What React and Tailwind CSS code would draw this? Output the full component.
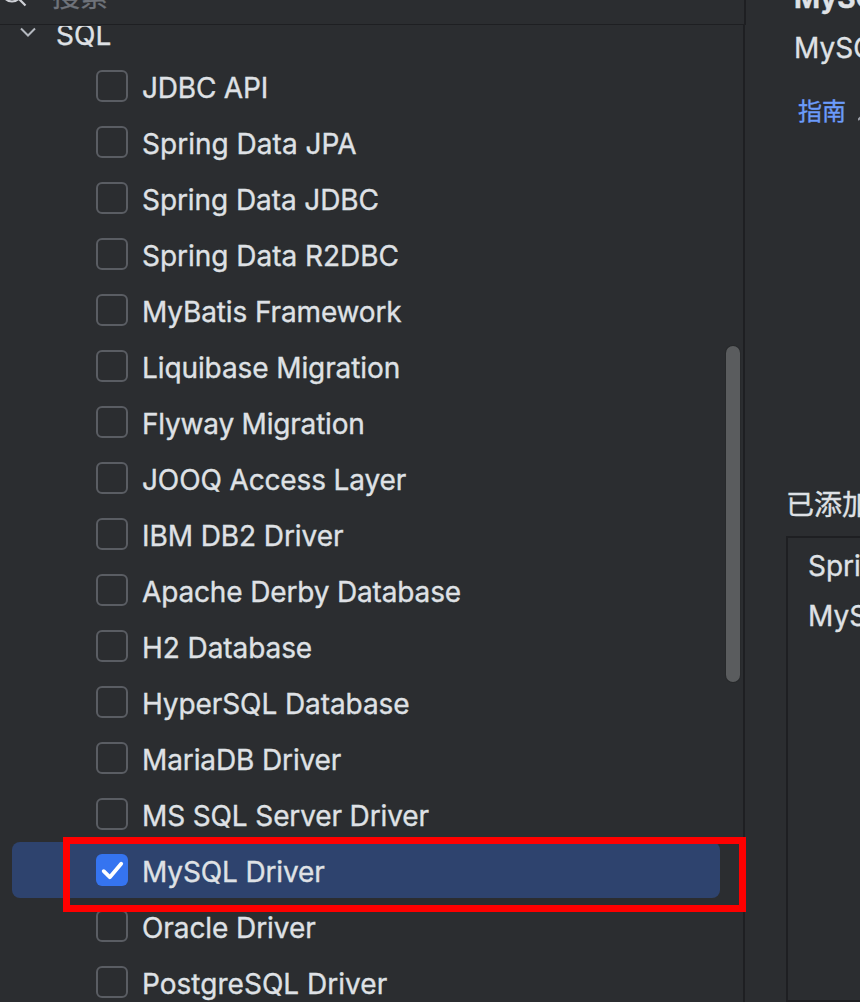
const rows = [
  ['JDBC API', 'tracking-[-0.2px]'],
  ['Spring Data JPA', 'tracking-[0.02px]'],
  ['Spring Data JDBC', 'tracking-[-0.08px]'],
  ['Spring Data R2DBC', 'tracking-[-0.02px]'],
  ['MyBatis Framework', 'tracking-[-0.13px]'],
  ['Liquibase Migration', 'tracking-[-0.1px]'],
  ['Flyway Migration', 'tracking-[-0.2px]'],
  ['JOOQ Access Layer', 'tracking-[-0.13px]'],
  ['IBM DB2 Driver', 'tracking-[-0.08px]'],
  ['Apache Derby Database', 'tracking-[-0.15px]'],
  ['H2 Database', 'tracking-[-0.08px]'],
  ['HyperSQL Database', 'tracking-[-0.09px]'],
  ['MariaDB Driver', 'tracking-[-0.12px]'],
  ['MS SQL Server Driver', 'tracking-[-0.13px]'],
  ['MySQL Driver', 'tracking-[-0.14px]'],
  ['Oracle Driver', 'tracking-[-0.08px]'],
  ['PostgreSQL Driver', 'tracking-[0.02px]'],
];

function Checkbox({ checked }) {
  if (checked) {
    return (
      <span className="flex size-8 shrink-0 items-center justify-center rounded-[6px] bg-[#3574f0]">
        <svg width="32" height="32" viewBox="0 0 32 32" fill="none">
          <path d="M7.7 17.2 13.8 23.2 25.2 9.8" stroke="#fff" strokeWidth="3.8" strokeLinecap="round" strokeLinejoin="round" />
        </svg>
      </span>
    );
  }
  return <span className="size-8 shrink-0 rounded-[6px] border-2 border-[#5a5d63]" />;
}

function Row({ label, tracking, checked }) {
  return (
    <div className={`ml-3 flex h-14 w-[708px] shrink-0 items-center rounded-lg pl-[84px] ${checked ? 'bg-[#2e436e]' : ''}`}>
      <Checkbox checked={checked} />
      <span className={`ml-[14px] pt-[3px] text-[28px] leading-9 whitespace-nowrap ${tracking}`}>{label}</span>
    </div>
  );
}

export default function App() {
  return (
    <div className="relative flex h-[1002px] w-[860px] overflow-hidden bg-[#2b2d30] font-['Inter','Noto_Sans_CJK_SC',sans-serif] text-[#dfe1e5] [-webkit-text-stroke:0.35px]">
      <div className="flex w-[746px] shrink-0 flex-col">
        <div className="flex h-[25px] w-[746px] shrink-0 items-end overflow-hidden border-r-2 border-b border-[#1e1f22]">
          <svg className="shrink-0" width="30" height="24" viewBox="0 0 30 24" fill="none" stroke="#ced0d6" strokeWidth="2.2">
            <circle cx="12" cy="-8" r="9.5" />
            <path d="M18.5 -1.5 25.5 5.5" />
          </svg>
          <span className="mb-[7px] ml-[22px] text-[28px] leading-10 text-[#6f737a]">搜索</span>
        </div>
        <div className="relative flex h-[977px] w-[745px] flex-col overflow-hidden border-r-2 border-[#1e1f22]">
          <div className="mt-px flex h-8 shrink-0 items-end overflow-hidden pl-5">
            <svg className="mb-[19px] shrink-0" width="16" height="12" viewBox="0 0 16 12" fill="none" stroke="#b4b8bf" strokeWidth="2">
              <path d="M1 1.5 8 8.5 15 1.5" />
            </svg>
            <span className="mb-[5px] ml-5 text-[28px] leading-9">SQL</span>
          </div>
          {rows.map(([label, tracking]) => (
            <Row key={label} label={label} tracking={tracking} checked={label === 'MySQL Driver'} />
          ))}
          <div className="absolute top-[321px] left-[726px] h-[336px] w-[14px] rounded-full bg-[#5a5c5e] shadow-[0_0_0_1px_#27292b]" />
        </div>
      </div>
      <div className="flex w-[114px] flex-col overflow-hidden whitespace-nowrap">
        <div className="mt-[-20px] ml-12 text-[28px] leading-9 font-bold">MySQL Driver</div>
        <div className="mt-[14px] ml-12 text-[28px] leading-9">MySQL JDBC driver.</div>
        <div className="mt-[28px] ml-[52px] flex text-[24px] leading-9">
          <span className="text-[#6b9bfa]">指南</span>
          <svg className="mt-[12px] ml-[12px] shrink-0" width="20" height="16" viewBox="0 0 20 16" stroke="#9da0a8" strokeWidth="2">
            <path d="M0 14 13 1" />
          </svg>
        </div>
        <div className="mt-[355px] ml-[40px] text-[28px] leading-10">已添加依赖项:</div>
        <div className="mt-[11px] ml-[40px] h-[480px] w-[300px] border-2 border-[#1e1f22] pt-[3px] pl-5">
          <div className="text-[28px] leading-[50px]">Spring Web</div>
          <div className="text-[28px] leading-[50px]">MySQL Driver</div>
        </div>
      </div>
      <div className="absolute top-[837px] left-[63px] h-[75px] w-[683px] border-7 border-[#ff0000]" />
    </div>
  );
}
